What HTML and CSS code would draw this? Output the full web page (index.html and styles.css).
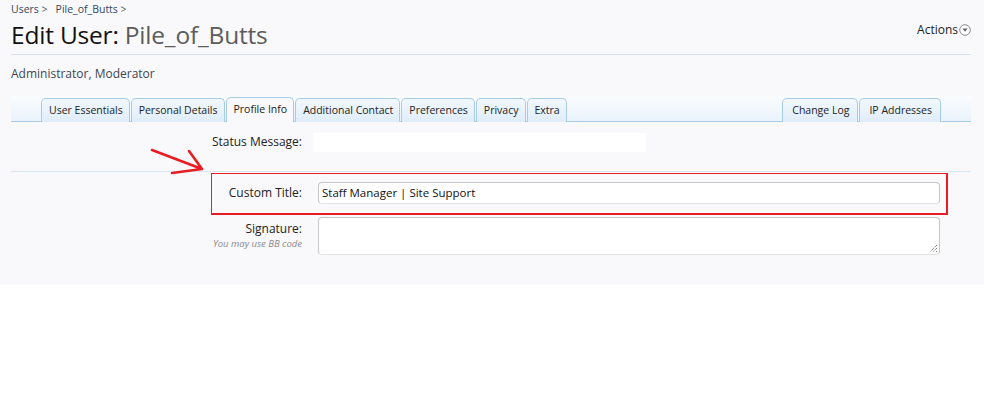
FILE: index.html
```html
<!DOCTYPE html>
<html>
<head>
<meta charset="utf-8">
<link rel="stylesheet" href="styles.css">
</head>
<body>
<div class="page">
  <div class="crumbs"><a href="#">Users</a> &gt;<span class="sp"></span><a href="#">Pile_of_Butts</a> &gt;</div>
  <div class="header">
    <h1>Edit User: <em>Pile_of_Butts</em></h1>
    <a class="actions" href="#">Actions<svg width="12" height="12" viewBox="0 0 12 12"><circle cx="6" cy="6" r="5.3" fill="#fff" stroke="#8a8a8a" stroke-width="1"/><path d="M3.3 4.6 H8.7 L6 7.8 Z" fill="#666"/></svg></a>
  </div>
  <div class="roles">Administrator, Moderator</div>
  <div class="tabbar">
    <ul class="tabs">
      <li>User Essentials</li>
      <li>Personal Details</li>
      <li class="active">Profile Info</li>
      <li>Additional Contact</li>
      <li>Preferences</li>
      <li>Privacy</li>
      <li>Extra</li>
    </ul>
    <ul class="tabs right">
      <li>Change Log</li>
      <li>IP Addresses</li>
    </ul>
  </div>
  <div class="row status">
    <label>Status Message:</label>
    <div class="blank"></div>
  </div>
  <div class="sep"></div>
  <div class="row custom">
    <label>Custom Title:</label>
    <div class="input">Staff Manager | Site Support</div>
  </div>
  <div class="row sig">
    <div class="lab"><label>Signature:</label><span class="hint">You may use BB code</span></div>
    <div class="textarea"><svg class="grip" width="9" height="9" viewBox="0 0 9 9"><path d="M8 1 L1 8 M8 4 L4 8 M8 7 L7 8" stroke="#555" stroke-width="1" stroke-dasharray="1 1"/></svg></div>
  </div>
  <svg class="arrow" width="70" height="40" viewBox="0 0 70 40">
    <path d="M2 4 L52 23 M39 5 L52 23 M22 27 L52 23" stroke="#ea1c24" stroke-width="2.6" stroke-linecap="round" fill="none"/>
  </svg>
</div>
</body>
</html>
```
FILE: styles.css
```css
* { box-sizing: border-box; }
body { margin: 0; background: #fff; font-family: "Open Sans", "DejaVu Sans", sans-serif; color: #222; }
.page { position: relative; background: #f9f9fb; height: 285px; padding: 0 13px 0 11px; }
a { text-decoration: none; color: inherit; }
.crumbs { font-size: 10.5px; color: #4a5a6b; padding-top: 2px; height: 16px; line-height: 14px; }
.crumbs a { color: #35485c; }
.crumbs .sp { display: inline-block; width: 8px; }
.header { display: flex; justify-content: space-between; align-items: flex-start; border-bottom: 1px solid #dbe4ee; height: 39px; }
h1 { margin: 0; font-weight: normal; font-size: 24.5px; line-height: 37px; color: #111; letter-spacing: -0.2px; }
h1 em { font-style: normal; color: #5c5c5c; }
.actions { font-size: 12px; color: #222; display: flex; align-items: center; gap: 1px; margin-top: 5px; }
.roles { font-size: 12px; color: #3f4550; padding-top: 10px; height: 41px; }
.tabbar { display: flex; height: 26px; border-bottom: 1px solid #a9cce6; background: linear-gradient(to bottom, #fafcfe, #eaf3fb); padding: 0 30px; }
.tabs { list-style: none; margin: 0; padding: 0; display: flex; align-items: flex-end; gap: 1px; }
.tabs.right { margin-left: auto; }
.tabs li { font-size: 10.5px; color: #222; height: 24px; line-height: 23px; padding: 0 6px 0 7px; border: 1px solid #a9cce6; border-bottom: none; border-radius: 5px 5px 0 0; background: linear-gradient(to bottom, #f2f8fd, #dfedf9); margin-bottom: -1px; }
.tabs.right li { padding: 0 8px 0 9px; }
.tabs li.active { background: #f9f9fb; height: 25px; }
.row { display: flex; }
.row label, .row .lab { width: 291px; text-align: right; font-size: 12px; color: #222; }
.status { padding-top: 10px; height: 49px; }
.status label { line-height: 20px; }
.blank { margin-left: 11px; width: 333px; height: 19px; background: #fff; margin-top: 1px; }
.sep { height: 1px; background: #d7e7f4; }
.custom { position: relative; padding-top: 10px; height: 45px; }
.custom::before { content: ""; position: absolute; left: 200px; right: 23px; top: 1px; height: 39px; border: 2px solid #ea1c24; border-width: 1px 2px 2px 1px; }
.custom label { line-height: 22px; }
.input { margin-left: 16px; width: 622px; height: 22px; border: 1px solid #c6c6c6; border-bottom-color: #e4e4e4; border-radius: 4px; background: #fff; font-size: 11.5px; line-height: 19px; padding-left: 3px; color: #111; }
.sig { padding-top: 0; }
.lab { display: flex; flex-direction: column; align-items: flex-end; padding-top: 3px; }
.lab label { line-height: 17px; }
.hint { font-size: 9.5px; font-style: italic; color: #8a8a8a; line-height: 13px; }
.textarea { position: relative; margin-left: 16px; width: 622px; height: 38px; border: 1px solid #c6c6c6; border-bottom-color: #e4e4e4; border-radius: 4px; background: #fff; }
.grip { position: absolute; right: 1px; bottom: 1px; }
.arrow { position: absolute; left: 150px; top: 146px; }
```
